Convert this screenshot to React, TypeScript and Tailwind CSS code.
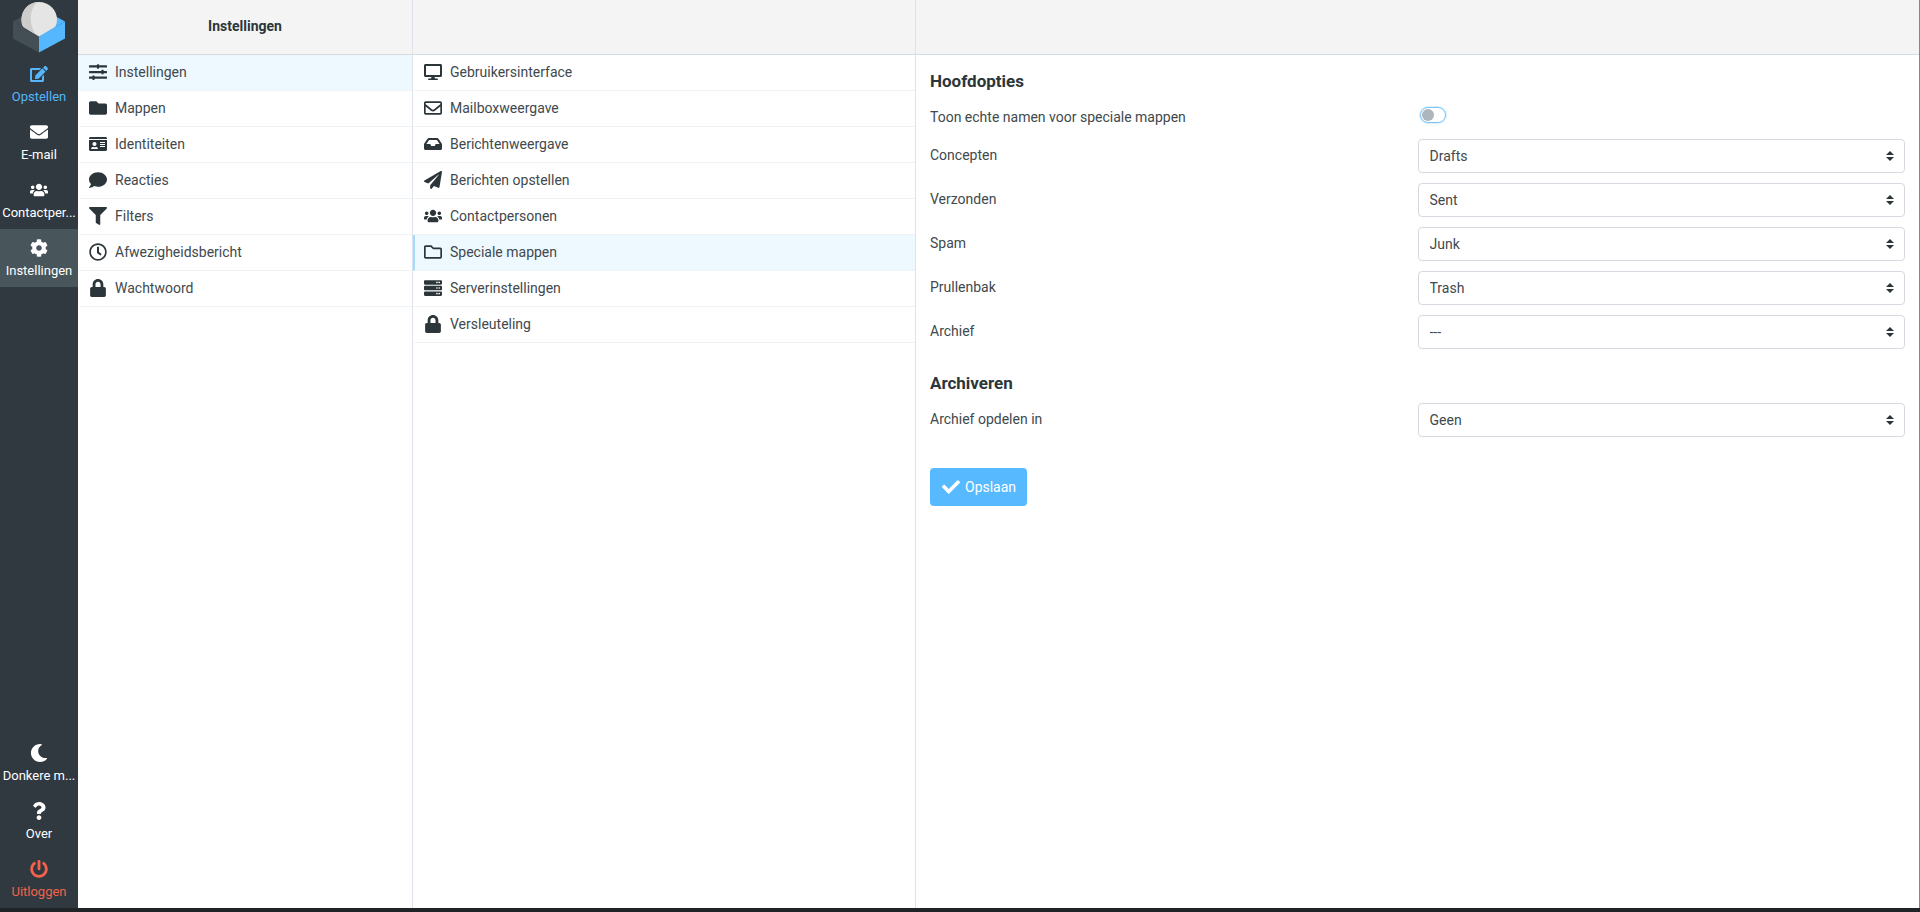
import React, { useState } from 'react'
import type { IconType } from 'react-icons'
import {
  FaCheck,
  FaCog,
  FaComment,
  FaDesktop,
  FaEdit,
  FaEnvelope,
  FaFilter,
  FaFolder,
  FaIdCard,
  FaInbox,
  FaLock,
  FaMoon,
  FaPaperPlane,
  FaPowerOff,
  FaQuestion,
  FaRegClock,
  FaRegEnvelope,
  FaRegFolder,
  FaServer,
  FaSlidersH,
  FaUsers,
} from 'react-icons/fa'
import clsx from 'clsx'

interface NavItem {
  label: string
  icon: IconType
  tone?: string
}

interface SelectField {
  id: string
  label: string
  value: string
}

const taskMenu: NavItem[] = [
  { label: 'Opstellen', icon: FaEdit, tone: 'text-[#55b6fb]' },
  { label: 'E-mail', icon: FaEnvelope },
  { label: 'Contactper...', icon: FaUsers },
  { label: 'Instellingen', icon: FaCog },
]

const specialMenu: NavItem[] = [
  { label: 'Donkere m...', icon: FaMoon },
  { label: 'Over', icon: FaQuestion },
  { label: 'Uitloggen', icon: FaPowerOff, tone: 'text-[#f3624d]' },
]

const sections: NavItem[] = [
  { label: 'Instellingen', icon: FaSlidersH },
  { label: 'Mappen', icon: FaFolder },
  { label: 'Identiteiten', icon: FaIdCard },
  { label: 'Reacties', icon: FaComment },
  { label: 'Filters', icon: FaFilter },
  { label: 'Afwezigheidsbericht', icon: FaRegClock },
  { label: 'Wachtwoord', icon: FaLock },
]

const preferences: NavItem[] = [
  { label: 'Gebruikersinterface', icon: FaDesktop },
  { label: 'Mailboxweergave', icon: FaRegEnvelope },
  { label: 'Berichtenweergave', icon: FaInbox },
  { label: 'Berichten opstellen', icon: FaPaperPlane },
  { label: 'Contactpersonen', icon: FaUsers },
  { label: 'Speciale mappen', icon: FaRegFolder },
  { label: 'Serverinstellingen', icon: FaServer },
  { label: 'Versleuteling', icon: FaLock },
]

const folderFields: SelectField[] = [
  { id: 'drafts', label: 'Concepten', value: 'Drafts' },
  { id: 'sent', label: 'Verzonden', value: 'Sent' },
  { id: 'junk', label: 'Spam', value: 'Junk' },
  { id: 'trash', label: 'Prullenbak', value: 'Trash' },
  { id: 'archive', label: 'Archief', value: '---' },
]

const folders = ['---', 'Drafts', 'Sent', 'Junk', 'Trash']

const Logo: React.FC = () => (
  <svg viewBox="0 0 52 52" className="h-[52px] w-[52px]" aria-hidden="true">
    <path d="M0 20.500 L26 35.500 V51.500 L0 37.500Z" fill="#434f55" />
    <path d="M0 20.500 L10 15 H42 L26 36Z" fill="#434f55" />
    <path d="M52 20.500 L26 35.500 V51.500 L52 37.500Z" fill="#55b8ff" />
    <path d="M42 15 L52 20.500 L26 36Z" fill="#55b8ff" />
    <path
      d="M26 1 C36 1 44 9 44 18.500 C44 21.500 43 24 42 26 L26 35.500 L10.500 26 C9 24 8.500 21.500 8.500 18.500 C8.500 9 16 1 26 1Z"
      fill="#e5e5e5"
    />
    <path
      d="M24 1 C15 2 8.500 9.500 8.500 18.500 C8.500 21.500 9 24 10.500 26 L23 33.500 C16 24 15.500 10 24 1Z"
      fill="#cfcdcb"
    />
  </svg>
)

const TaskButton: React.FC<{ item: NavItem; active?: boolean }> = ({ item, active }) => {
  const Icon = item.icon
  return (
    <a
      href="#"
      className={clsx(
        'flex h-[58px] flex-col items-center pt-[10px] text-[13px]',
        item.tone ?? 'text-white',
        active && 'bg-[#48555b]'
      )}
    >
      <Icon className="h-[18px] w-auto shrink-0" aria-hidden="true" />
      <span className="mt-[6px] leading-4 whitespace-nowrap">{item.label}</span>
    </a>
  )
}

const ListItem: React.FC<{ item: NavItem; active?: boolean; marked?: boolean }> = ({
  item,
  active,
  marked,
}) => {
  const Icon = item.icon
  return (
    <li
      className={clsx(
        'border-b border-l-2 border-b-[#f0f3f5]',
        active && 'bg-[#edf8ff]',
        active && marked ? 'border-l-[#a5dcfd]' : 'border-l-transparent'
      )}
    >
      <a href="#" className="flex h-[35px] items-center gap-[5px] pb-px pl-[6px]">
        <span className="flex w-6 shrink-0 justify-center text-[#2c363a]">
          <Icon className="h-[18px] w-auto shrink-0" aria-hidden="true" />
        </span>
        {item.label}
      </a>
    </li>
  )
}

const SelectRow: React.FC<{ field: SelectField; options: string[] }> = ({ field, options }) => (
  <div className="grid grid-cols-2">
    <label htmlFor={field.id} className="pt-[6px] leading-5">
      {field.label}
    </label>
    <div className="relative">
      <select
        id={field.id}
        defaultValue={field.value}
        className="h-[34px] w-full appearance-none rounded border border-[#d5dae0] bg-white pr-8 pl-[11px]"
      >
        {options.map((option) => (
          <option key={option}>{option}</option>
        ))}
      </select>
      <svg
        viewBox="0 0 4 5"
        className="pointer-events-none absolute top-3 right-[11px] h-[10px] w-2"
        aria-hidden="true"
      >
        <path d="M2 0L0 2h4zm0 5L0 3h4z" fill="#2c363a" />
      </svg>
    </div>
  </div>
)

export default function App() {
  const [realNames, setRealNames] = useState<boolean>(false)

  return (
    <div className="flex min-h-screen border-b-4 border-[#202427] bg-white font-['Roboto',sans-serif] text-sm text-[#41494d]">
      <nav className="flex w-[78px] shrink-0 flex-col bg-[#30393f]">
        <div className="flex h-[55px] justify-center pt-px">
          <Logo />
        </div>
        {taskMenu.map((item) => (
          <TaskButton key={item.label} item={item} active={item.label === 'Instellingen'} />
        ))}
        <div className="mt-auto">
          {specialMenu.map((item) => (
            <TaskButton key={item.label} item={item} />
          ))}
        </div>
      </nav>

      <section className="w-[335px] shrink-0 border-r border-[#dde3e8]">
        <header className="flex h-[55px] items-center justify-center border-b border-[#d5dce1] bg-[#f4f4f4] pb-[2px]">
          <h1 className="font-bold text-[#2c363a]">Instellingen</h1>
        </header>
        <ul>
          {sections.map((item) => (
            <ListItem key={item.label} item={item} active={item.label === 'Instellingen'} />
          ))}
        </ul>
      </section>

      <section className="w-[503px] shrink-0 border-r border-[#dde3e8]">
        <header className="h-[55px] border-b border-[#d5dce1] bg-[#f4f4f4]" />
        <ul>
          {preferences.map((item) => (
            <ListItem
              key={item.label}
              item={item}
              active={item.label === 'Speciale mappen'}
              marked
            />
          ))}
        </ul>
      </section>

      <main className="min-w-0 flex-1 border-r border-[#85888a]">
        <header className="h-[55px] border-b border-[#d5dce1] bg-[#f4f4f4]" />
        <form className="px-[14px] pt-[14px]" onSubmit={(e) => e.preventDefault()}>
          <fieldset>
            <legend className="text-[17px] leading-6 font-bold text-[#2c363a]">Hoofdopties</legend>
            <div className="mt-[14px] mb-3 grid grid-cols-2">
              <label htmlFor="real-names" className="leading-5">
                Toon echte namen voor speciale mappen
              </label>
              <input
                id="real-names"
                type="checkbox"
                checked={realNames}
                onChange={(e) => setRealNames(e.target.checked)}
                className="ml-[2px] h-4 w-[26px] appearance-none rounded-full border border-[#7fc4f5] bg-white shadow-[0_0_0_1px_#d8effd] before:mt-px before:ml-px before:block before:h-3 before:w-3 before:rounded-full before:bg-[#adb5bd] checked:before:ml-[11px]"
              />
            </div>
            <div className="flex flex-col gap-[10px]">
              {folderFields.map((field) => (
                <SelectRow key={field.id} field={field} options={folders} />
              ))}
            </div>
          </fieldset>
          <fieldset className="mt-[22px]">
            <legend className="mb-2 text-[17px] leading-6 font-bold text-[#2c363a]">
              Archiveren
            </legend>
            <SelectRow
              field={{ id: 'split', label: 'Archief opdelen in', value: 'Geen' }}
              options={['Geen', 'Jaar', 'Maand']}
            />
          </fieldset>
          <button
            type="submit"
            className="mt-[31px] flex h-[38px] items-center gap-[5px] rounded bg-[#57b9ff] pr-[11px] pb-px pl-3 text-white"
          >
            <FaCheck className="h-[18px] w-auto" aria-hidden="true" />
            Opslaan
          </button>
        </form>
      </main>
    </div>
  )
}
